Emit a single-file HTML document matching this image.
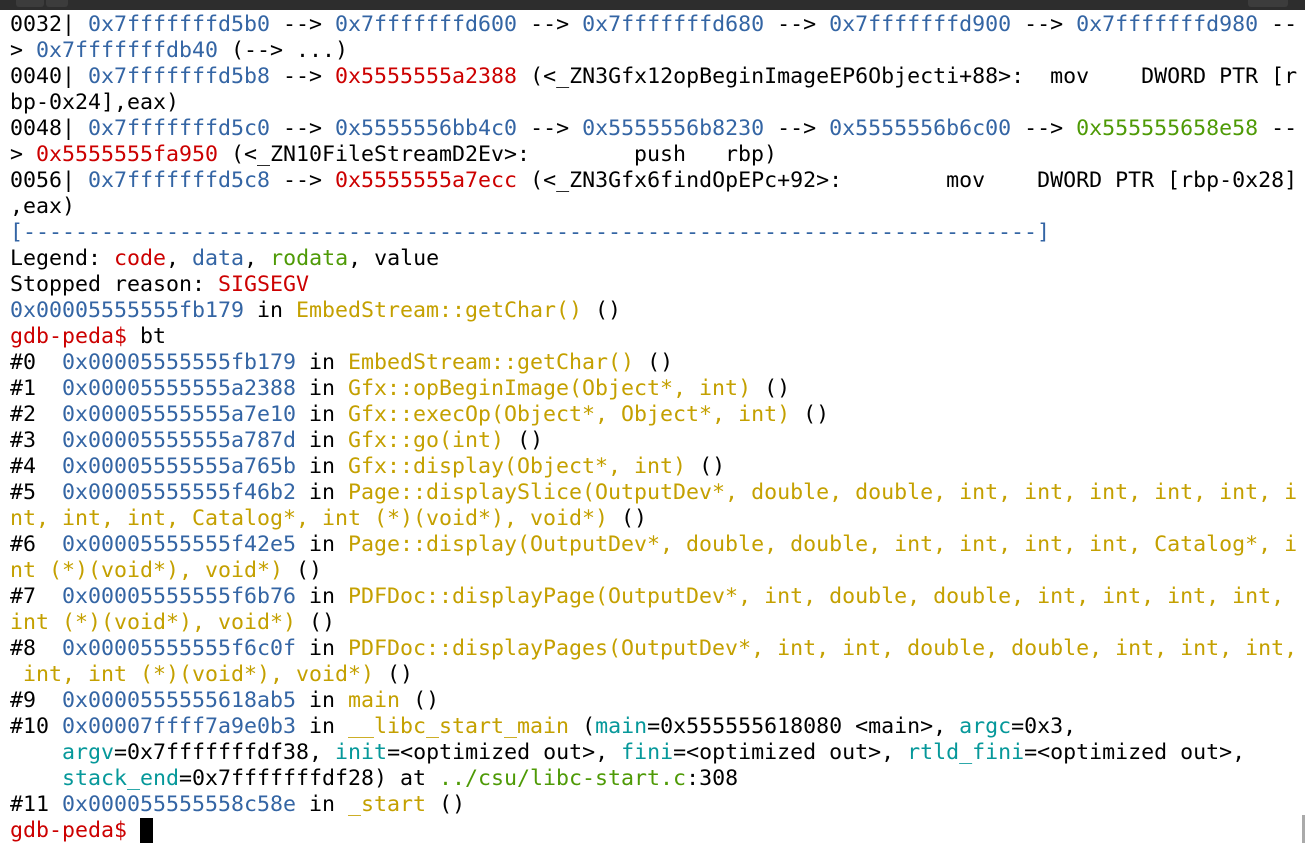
<!DOCTYPE html>
<html><head><meta charset="utf-8"><style>
html,body{margin:0;padding:0;background:#fff;width:1305px;height:843px;overflow:hidden}
.top{position:absolute;left:0;top:0;width:1305px;height:10px;background:#2d2d2d}
.tab{position:absolute;top:0;height:7px;background:#3c3c3c;border-radius:0 0 3px 3px}
pre{position:absolute;left:10px;top:12px;margin:0;font-family:"DejaVu Sans Mono","Liberation Mono",monospace;font-size:21.6px;line-height:26px;color:#000;white-space:pre}
.b{color:#3465a4}.r{color:#cc0000}.g{color:#4e9a06}.y{color:#c4a000}.c{color:#06989a}
.cur{background:#000;color:#000}
.sb{position:absolute;right:0;top:815px;width:3px;height:28px;background:#aaa}
</style></head><body>
<div class="top"><div class="tab" style="left:16px;width:28px"></div><div class="tab" style="left:46px;width:22px"></div><div class="tab" style="left:1248px;width:40px"></div></div>
<pre>0032| <span class="b">0x7fffffffd5b0</span> --&gt; <span class="b">0x7fffffffd600</span> --&gt; <span class="b">0x7fffffffd680</span> --&gt; <span class="b">0x7fffffffd900</span> --&gt; <span class="b">0x7fffffffd980</span> --
&gt; <span class="b">0x7fffffffdb40</span> (--&gt; ...)
0040| <span class="b">0x7fffffffd5b8</span> --&gt; <span class="r">0x5555555a2388</span> (&lt;_ZN3Gfx12opBeginImageEP6Objecti+88&gt;:  mov    DWORD PTR [r
bp-0x24],eax)
0048| <span class="b">0x7fffffffd5c0</span> --&gt; <span class="b">0x5555556bb4c0</span> --&gt; <span class="b">0x5555556b8230</span> --&gt; <span class="b">0x5555556b6c00</span> --&gt; <span class="g">0x555555658e58</span> --
&gt; <span class="r">0x5555555fa950</span> (&lt;_ZN10FileStreamD2Ev&gt;:        push   rbp)
0056| <span class="b">0x7fffffffd5c8</span> --&gt; <span class="r">0x5555555a7ecc</span> (&lt;_ZN3Gfx6findOpEPc+92&gt;:        mov    DWORD PTR [rbp-0x28]
,eax)
<span class="b">[------------------------------------------------------------------------------]</span>
Legend: <span class="r">code</span>, <span class="b">data</span>, <span class="g">rodata</span>, value
Stopped reason: <span class="r">SIGSEGV</span>
<span class="b">0x00005555555fb179</span> in <span class="y">EmbedStream::getChar()</span> ()
<span class="r">gdb-peda$ </span>bt
#0  <span class="b">0x00005555555fb179</span> in <span class="y">EmbedStream::getChar()</span> ()
#1  <span class="b">0x00005555555a2388</span> in <span class="y">Gfx::opBeginImage(Object*, int)</span> ()
#2  <span class="b">0x00005555555a7e10</span> in <span class="y">Gfx::execOp(Object*, Object*, int)</span> ()
#3  <span class="b">0x00005555555a787d</span> in <span class="y">Gfx::go(int)</span> ()
#4  <span class="b">0x00005555555a765b</span> in <span class="y">Gfx::display(Object*, int)</span> ()
#5  <span class="b">0x00005555555f46b2</span> in <span class="y">Page::displaySlice(OutputDev*, double, double, int, int, int, int, int, i
nt, int, int, Catalog*, int (*)(void*), void*)</span> ()
#6  <span class="b">0x00005555555f42e5</span> in <span class="y">Page::display(OutputDev*, double, double, int, int, int, int, Catalog*, i
nt (*)(void*), void*)</span> ()
#7  <span class="b">0x00005555555f6b76</span> in <span class="y">PDFDoc::displayPage(OutputDev*, int, double, double, int, int, int, int,
int (*)(void*), void*)</span> ()
#8  <span class="b">0x00005555555f6c0f</span> in <span class="y">PDFDoc::displayPages(OutputDev*, int, int, double, double, int, int, int,
 int, int (*)(void*), void*)</span> ()
#9  <span class="b">0x0000555555618ab5</span> in <span class="y">main</span> ()
#10 <span class="b">0x00007ffff7a9e0b3</span> in <span class="y">__libc_start_main</span> (<span class="c">main</span>=0x555555618080 &lt;main&gt;, <span class="c">argc</span>=0x3,
    <span class="c">argv</span>=0x7fffffffdf38, <span class="c">init</span>=&lt;optimized out&gt;, <span class="c">fini</span>=&lt;optimized out&gt;, <span class="c">rtld_fini</span>=&lt;optimized out&gt;,
    <span class="c">stack_end</span>=0x7fffffffdf28) at <span class="g">../csu/libc-start.c</span>:308
#11 <span class="b">0x000055555558c58e</span> in <span class="y">_start</span> ()
<span class="r">gdb-peda$ </span><span class="cur">_</span></pre>
<div class="sb"></div>
</body></html>
